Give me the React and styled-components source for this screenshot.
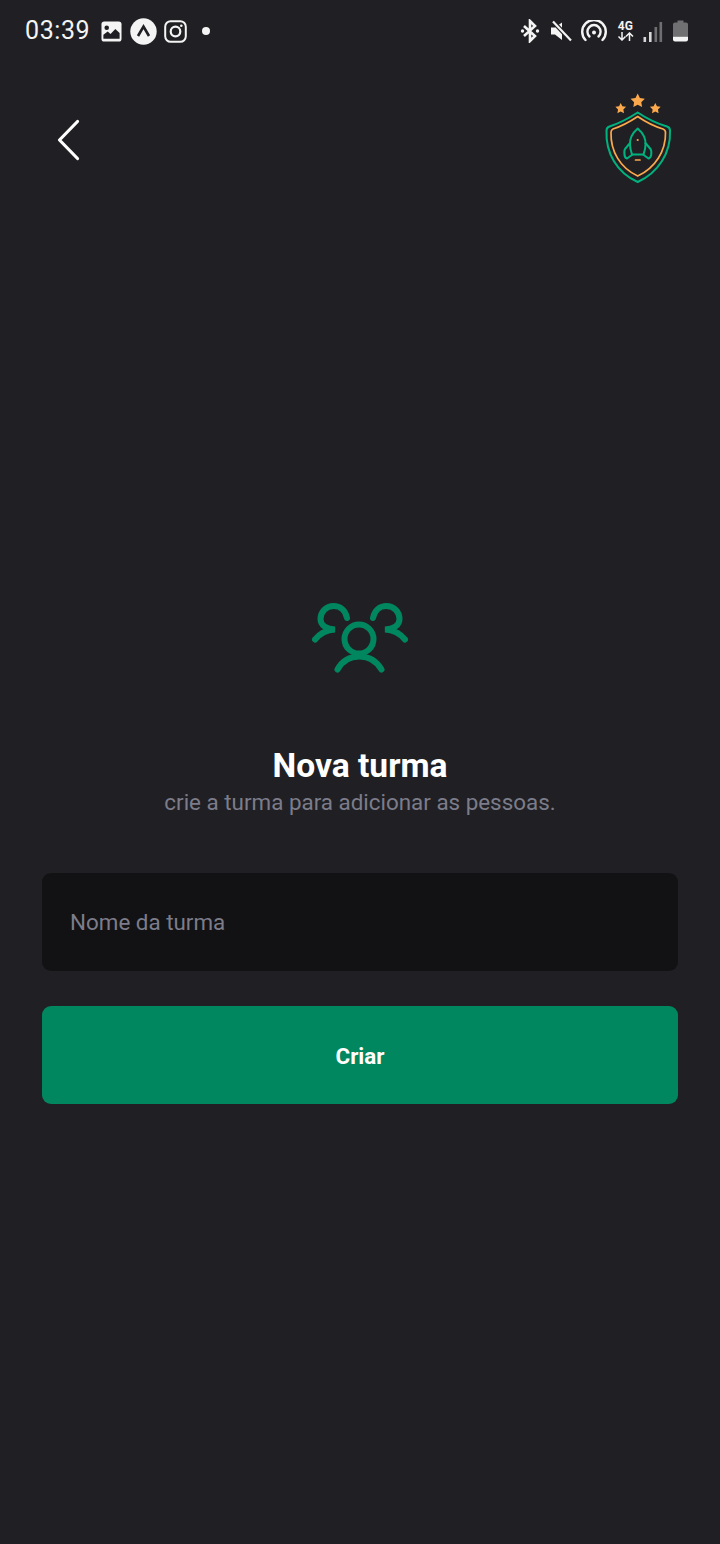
import React from 'react'
import styled, { createGlobalStyle } from 'styled-components'

const GlobalStyle = createGlobalStyle`
  * { box-sizing: border-box; }
  html, body { margin: 0; padding: 0; background: #202024; }
  body { font-family: Roboto, "Liberation Sans", sans-serif; }
`

function PictureIcon() {
  return (
    <svg width="21" height="21" viewBox="0 0 22 22">
      <rect x="0.5" y="0.5" width="21" height="21" rx="3" fill="#f4f4f4" />
      <circle cx="6" cy="7" r="2.4" fill="#202024" />
      <path d="M2.5 18.5 L2.5 14.5 L7 11 L10 13.5 L15 8.5 L19.5 12.5 L19.5 18.5 Z" fill="#202024" />
    </svg>
  )
}

function ExpoIcon() {
  return (
    <svg width="27" height="27" viewBox="0 0 27 27">
      <circle cx="13.5" cy="13.5" r="13.2" fill="#f4f4f4" />
      <path d="M8 18 L13.5 8.5 L19 18" fill="none" stroke="#202024" strokeWidth="2.6" />
    </svg>
  )
}

function InstagramIcon() {
  return (
    <svg width="23" height="23" viewBox="0 0 23 23" fill="none" stroke="#f4f4f4">
      <rect x="1.2" y="1.2" width="20.6" height="20.6" rx="5.5" strokeWidth="2" />
      <circle cx="11.5" cy="11.5" r="4.8" strokeWidth="2.2" />
      <circle cx="17.3" cy="5.7" r="1.3" fill="#f4f4f4" stroke="none" />
    </svg>
  )
}

function BluetoothIcon() {
  return (
    <svg width="20" height="24" viewBox="0 0 20 24" fill="none" stroke="#f4f4f4" strokeWidth="2.6">
      <path d="M4 7 L15 17 L10 22 L10 2 L15 7 L4 17" />
      <circle cx="2.5" cy="12" r="1.7" fill="#f4f4f4" stroke="none" />
      <circle cx="17.5" cy="12" r="1.7" fill="#f4f4f4" stroke="none" />
    </svg>
  )
}

function MuteIcon() {
  return (
    <svg width="22" height="22" viewBox="0 0 22 22">
      <path d="M1 7.5 H5 L12 2.5 V20 L5 14.5 H1 Z" fill="#f4f4f4" />
      <path d="M3 1.5 L21 20.5" stroke="#202024" strokeWidth="4.5" />
      <path d="M3 1.5 L21 20.5" stroke="#f4f4f4" strokeWidth="2.2" />
    </svg>
  )
}

function HotspotIcon() {
  return (
    <svg width="26" height="22" viewBox="0 0 26 22" fill="none" stroke="#f4f4f4" strokeWidth="2.4" strokeLinecap="round">
      <path d="M4.5 20 A11.8 11.8 0 1 1 21.5 20" />
      <path d="M8.5 16.5 A6.6 6.6 0 1 1 17.5 16.5" />
      <circle cx="13" cy="12.5" r="2" fill="#f4f4f4" stroke="none" />
    </svg>
  )
}

function TransferArrows() {
  return (
    <svg width="17" height="9" viewBox="0 0 17 9" fill="none" stroke="#f4f4f4" strokeWidth="1.5">
      <path d="M5 0 V8 M1.5 4.5 L5 8 L8.5 4.5" />
      <path d="M12.5 9 V1 M9 4.5 L12.5 1 L16 4.5" />
    </svg>
  )
}

function SignalIcon() {
  return (
    <svg width="20" height="21" viewBox="0 0 20 21">
      <rect x="0.5" y="16" width="2.6" height="5" fill="#d8d8d8" />
      <rect x="6" y="11" width="2.6" height="10" fill="#d8d8d8" />
      <rect x="11.5" y="6" width="2.6" height="15" fill="#6f6f72" />
      <rect x="16.5" y="1" width="2.6" height="20" fill="#6f6f72" />
    </svg>
  )
}

function BatteryIcon() {
  return (
    <svg width="15" height="22" viewBox="0 0 15 22">
      <path d="M4.5 0.5 H10.5 V2.5 H13 Q15 2.5 15 4.5 V16 H0 V4.5 Q0 2.5 2 2.5 H4.5 Z" fill="#707073" />
      <path d="M0 16.5 H15 V19.5 Q15 21.5 13 21.5 H2 Q0 21.5 0 19.5 Z" fill="#f4f4f4" />
    </svg>
  )
}

function CaretLeft() {
  return (
    <svg width="24" height="42" viewBox="0 0 24 42" fill="none" stroke="#fff" strokeWidth="3.2" strokeLinecap="round" strokeLinejoin="round">
      <path d="M20.5 2.5 L2.5 21 L20.5 39.5" />
    </svg>
  )
}

function Star({ x, y, r }) {
  const pts = []
  for (let i = 0; i < 10; i++) {
    const rad = i % 2 === 0 ? r : r * 0.5
    const a = -Math.PI / 2 + (i * Math.PI) / 5
    pts.push(`${(x + rad * Math.cos(a)).toFixed(2)},${(y + rad * Math.sin(a)).toFixed(2)}`)
  }
  return <polygon points={pts.join(' ')} fill="#FBA94C" />
}

function Logo() {
  return (
    <svg width="100" height="105" viewBox="0 0 100 105" fill="none">
      <Star x={47.7} y={16} r={7.5} />
      <Star x={30.7} y={23.6} r={5.6} />
      <Star x={65.3} y={23.6} r={5.6} />
      <path
        d="M47.7 27.5 Q62 37 77 41.5 Q80 42.5 80 45.5 C81 68 68 88 47.7 97 C27 88 15.5 68 16.5 45.5 Q16.5 42.5 19.5 41.5 Q33 37 47.7 27.5 Z"
        stroke="#00B37E"
        strokeWidth="2"
      />
      <path
        d="M47.7 31.5 Q60 40 73 44 Q75.5 45 75.5 47.5 C76 66 65 83 47.7 91 C30 83 20.5 66 21 47.5 Q21 45 23 44 Q35 40 47.7 31.5 Z"
        stroke="#FBA94C"
        strokeWidth="1.7"
      />
      <path
        d="M47.7 43.5 C42.5 48 39.5 54 40 60 C40 63.5 41 66.5 42 69.5 H53.5 C54.5 66.5 55.5 63.5 55.5 60 C56 54 53 48 47.7 43.5 Z"
        stroke="#00B37E"
        strokeWidth="2"
        strokeLinejoin="round"
      />
      <path
        d="M40.5 57.5 L35 64 Q34 65.5 34.5 70 Q35 73 37 73.5 L42.5 69.5 M55 57.5 L60.5 64 Q61.7 65.5 61.2 70 Q60.5 73 58.5 73.5 L53 69.5"
        stroke="#00B37E"
        strokeWidth="2"
        strokeLinejoin="round"
      />
      <circle cx="47.7" cy="55" r="1.1" fill="#FBA94C" />
      <path d="M45.5 75 H50" stroke="#FBA94C" strokeWidth="1.7" strokeLinecap="round" />
    </svg>
  )
}

function UsersIcon() {
  return (
    <svg width="120" height="95" viewBox="0 0 120 95" fill="none" stroke="#00875F" strokeWidth="6" strokeLinecap="round">
      <circle cx="59" cy="50" r="14.5" />
      <path d="M37.5 80.5 C42 72 50 67.5 59.5 67.5 C69 67.5 76.5 72 81.5 80.5" />
      <path d="M47 29 C45.5 21 40 17 33.5 17 C26 17 20.5 23 20.5 30 C20.5 36 26 40 35 40.5 C26 41 19.5 45 15 50.5" />
      <path d="M73 29 C74.5 21 80 17 86.5 17 C94 17 99.5 23 99.5 30 C99.5 36 94 40 85 40.5 C94 41 100.5 45 105 50.5" />
    </svg>
  )
}

export default function App() {
  return (
    <Screen>
      <GlobalStyle />
      <StatusBar>
        <StatusGroup>
          <Clock>03:39</Clock>
          <NoticeIcons>
            <PictureIcon />
            <ExpoIcon />
            <InstagramIcon />
            <NoticeDot />
          </NoticeIcons>
        </StatusGroup>
        <SystemIcons>
          <BluetoothIcon />
          <MuteIcon />
          <HotspotIcon />
          <NetworkType>
            <NetworkLabel>4G</NetworkLabel>
            <TransferArrows />
          </NetworkType>
          <SignalIcon />
          <BatteryIcon />
        </SystemIcons>
      </StatusBar>

      <Header>
        <BackButton>
          <CaretLeft />
        </BackButton>
        <LogoSlot>
          <Logo />
        </LogoSlot>
      </Header>

      <Content>
        <IconSlot>
          <UsersIcon />
        </IconSlot>
        <Title>Nova turma</Title>
        <Subtitle>crie a turma para adicionar as pessoas.</Subtitle>
        <NameInput placeholder="Nome da turma" />
        <CreateButton>Criar</CreateButton>
      </Content>
    </Screen>
  )
}

const Screen = styled.div`
  width: 720px;
  height: 1544px;
  background: #202024;
  display: flex;
  flex-direction: column;
  overflow: hidden;
`

const StatusBar = styled.div`
  height: 62px;
  padding: 0 32px 0 25px;
  display: flex;
  align-items: center;
  justify-content: space-between;
  color: #f4f4f4;
`

const StatusGroup = styled.div`
  display: flex;
  align-items: center;
  gap: 11px;
`

const Clock = styled.span`
  font-size: 25px;
  letter-spacing: 0.6px;
  line-height: 30px;
`

const NoticeIcons = styled.div`
  display: flex;
  align-items: center;
  gap: 7.5px;
`

const NoticeDot = styled.span`
  width: 8px;
  height: 8px;
  margin-left: 7px;
  border-radius: 50%;
  background: #f4f4f4;
`

const SystemIcons = styled.div`
  display: flex;
  align-items: center;
  gap: 9.6px;
`

const NetworkType = styled.div`
  display: flex;
  flex-direction: column;
  align-items: center;
`

const NetworkLabel = styled.span`
  font-size: 12px;
  font-weight: 700;
  line-height: 11px;
`

const Header = styled.header`
  height: 130px;
  padding: 0 30px 0 57px;
  display: flex;
  align-items: flex-start;
  justify-content: space-between;
`

const BackButton = styled.button`
  margin-top: 57px;
  padding: 0;
  border: 0;
  background: none;
  display: flex;
`

const LogoSlot = styled.div`
  margin-top: 23px;
  display: flex;
`

const Content = styled.main`
  padding: 0 42px;
  margin-top: 397px;
  display: flex;
  flex-direction: column;
  align-items: center;
`

const IconSlot = styled.div`
  display: flex;
  height: 95px;
`

const Title = styled.h1`
  margin: 62px 0 0;
  font-size: 33.6px;
  line-height: 40px;
  font-weight: 700;
  color: #fff;
`

const Subtitle = styled.p`
  margin: 1px 0 0;
  font-size: 22.4px;
  line-height: 30px;
  color: #7c7c8a;
`

const NameInput = styled.input`
  width: 100%;
  height: 98px;
  margin-top: 56px;
  padding: 0 28px;
  border: 0;
  border-radius: 9px;
  background: #121214;
  color: #fff;
  font-family: inherit;
  font-size: 22.4px;
  outline: none;

  &::placeholder {
    color: #7c7c8a;
    opacity: 1;
  }
`

const CreateButton = styled.button`
  width: 100%;
  height: 98px;
  margin-top: 35px;
  padding: 2px 0 0;
  border: 0;
  border-radius: 9px;
  background: #00875f;
  color: #fff;
  font-family: inherit;
  font-size: 22.4px;
  font-weight: 700;
`
